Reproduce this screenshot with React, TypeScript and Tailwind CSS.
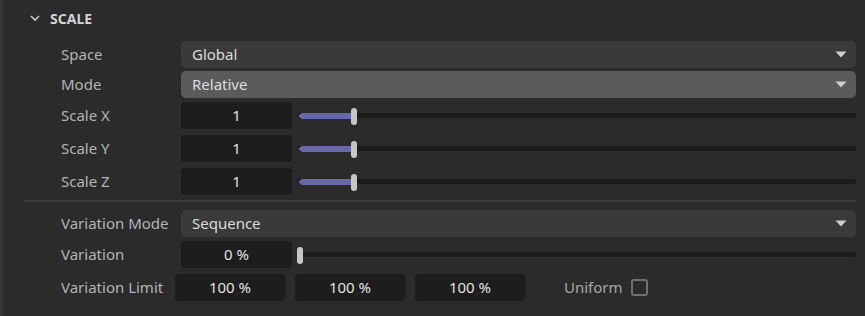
import React from "react";

type RowProps = {
  label: string;
  children: React.ReactNode;
  h?: string;
};

function Row({ label, children, h = "h-[33px]" }: RowProps) {
  return (
    <div className={`flex items-center ${h}`}>
      <div className="w-[120px] shrink-0 text-[#b4b4b4]">{label}</div>
      <div className="flex flex-1 items-center">{children}</div>
    </div>
  );
}

function Dropdown({ value, active }: { value: string; active?: boolean }) {
  return (
    <div
      className={`flex h-[27px] flex-1 items-center justify-between rounded-[5px] pl-[11px] pr-[9px] text-[#dcdcdc] ${
        active ? "bg-[#5b5b5b]" : "bg-[#3a3a3a]"
      }`}
    >
      <span>{value}</span>
      <svg width="12" height="7" viewBox="0 0 12 7">
        <path d="M0.5 0.5 L11.5 0.5 L6 6.5 Z" fill="#cfcfcf" />
      </svg>
    </div>
  );
}

function NumberBox({ value, w = "w-[111px]" }: { value: string; w?: string }) {
  return (
    <div
      className={`flex h-[27px] ${w} shrink-0 items-center justify-center rounded-[4px] bg-[#1d1d1d] text-[#e2e2e2]`}
    >
      {value}
    </div>
  );
}

function Slider({ fill }: { fill: number }) {
  return (
    <div className="relative ml-[5px] flex h-[18px] flex-1 items-center">
      <div className="h-[5px] w-full rounded-full bg-[#1b1b1b]" />
      {fill > 0 && (
        <svg
          className="absolute left-[1px] top-[6px]"
          width={fill}
          height="6"
          viewBox={`0 0 ${fill} 6`}
        >
          <path d={`M0 3 L4 0 L${fill} 0 L${fill} 6 L4 6 Z`} fill="#6767ad" />
        </svg>
      )}
      <div
        className="absolute top-[1px] h-[17px] w-[6px] rounded-full bg-[#c6c6c6]"
        style={{ left: fill }}
      />
    </div>
  );
}

export default function App() {
  return (
    <div
      className="h-[316px] w-[865px] overflow-hidden border-l-[3px] border-[#383838] bg-[#2b2b2b] text-[15px] text-[#dcdcdc]"
      style={{ fontFamily: '"Noto Sans", "Open Sans", sans-serif' }}
    >
      <div className="flex h-[39px] items-center pb-[3px] pl-[27px]">
        <svg width="10" height="7" viewBox="0 0 10 7" className="mr-[10px]">
          <path d="M1 1 L5 5 L9 1" stroke="#c8c8c8" strokeWidth="1.6" fill="none" />
        </svg>
        <span className="text-[14px] font-bold text-[#d4d4d4]">SCALE</span>
      </div>

      <div className="pl-[58px] pr-[9px]">
        <Row label="Space" h="h-[30px]">
          <Dropdown value="Global" />
        </Row>
        <Row label="Mode" h="h-[30px]">
          <Dropdown value="Relative" active />
        </Row>
        <Row label="Scale X">
          <NumberBox value="1" />
          <Slider fill={54} />
        </Row>
        <Row label="Scale Y">
          <NumberBox value="1" />
          <Slider fill={54} />
        </Row>
        <Row label="Scale Z">
          <NumberBox value="1" />
          <Slider fill={54} />
        </Row>
      </div>

      <div className="ml-[22px] mr-[9px] mt-[2px] h-[2px] bg-[#3a3a3a]" />

      <div className="mt-[6px] pl-[58px] pr-[9px]">
        <Row label="Variation Mode" h="h-[30px]">
          <Dropdown value="Sequence" />
        </Row>
        <Row label="Variation">
          <NumberBox value="0 %" />
          <Slider fill={0} />
        </Row>
        <div className="flex h-[33px] items-center">
          <div className="w-[114px] shrink-0 text-[#b4b4b4]">Variation Limit</div>
          <div className="flex items-center gap-[10px]">
            <NumberBox value="100 %" w="w-[110px]" />
            <NumberBox value="100 %" w="w-[110px]" />
            <NumberBox value="100 %" w="w-[110px]" />
          </div>
          <span className="ml-[39px] text-[#a8a8a8]">Uniform</span>
          <div className="ml-[8px] h-[17px] w-[17px] rounded-[3px] border-2 border-[#707070]" />
        </div>
      </div>
    </div>
  );
}
